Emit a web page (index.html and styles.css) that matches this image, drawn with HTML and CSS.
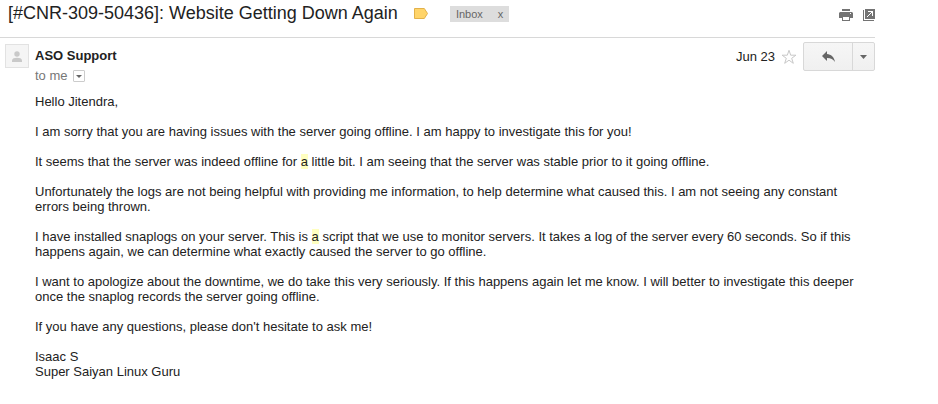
FILE: index.html
```html
<!DOCTYPE html>
<html lang="en">
<head>
    <meta charset="UTF-8">
    <meta name="viewport" content="width=device-width, initial-scale=1.0">
    <title>[#CNR-309-50436]: Website Getting Down Again</title>
    <link rel="stylesheet" href="styles.css">
</head>
<body>

    <main class="thread">

        <!-- Subject line -->
        <header class="subject-bar">
            <h1 class="subject">[#CNR-309-50436]: Website Getting Down Again</h1>
            <button type="button" class="icon-button importance" aria-label="Important">
                <svg width="14" height="11" viewBox="0 0 14 11">
                    <path d="M.5.5h9.8l3.2 5-3.2 5H.5z" fill="#ffd469" stroke="#e2b14a"/>
                </svg>
            </button>
            <div class="label">
                <span class="label-name">Inbox</span>
                <button type="button" class="label-remove" aria-label="Remove label Inbox">x</button>
            </div>
            <div class="tools">
                <button type="button" class="icon-button" aria-label="Print all">
                    <svg width="14" height="12" viewBox="0 0 14 12" fill="#737373">
                        <path d="M3 0h8v2H3z"/>
                        <path d="M1 3h12l1 1v5h-3V7H3v2H0V4z"/>
                        <path d="M3 7h8v5H3zM4 8v3h6V8z" fill-rule="evenodd"/>
                        <path d="M11 4h1v1h-1z" fill="#fff"/>
                    </svg>
                </button>
                <button type="button" class="icon-button" aria-label="In new window">
                    <svg width="12" height="12" viewBox="0 0 12 12">
                        <path d="M0 1h1v10h10v1H0zM2 0h10v10H2z" fill="#737373"/>
                        <path d="M5 2h5v5H9V4H8v1H7v1H6v1H5v1H4V7h1V6h1V5h1V4h1V3H5z" fill="#fff"/>
                    </svg>
                </button>
            </div>
        </header>

        <!-- Message -->
        <article class="message">
            <div class="avatar">
                <svg width="10" height="11" viewBox="0 0 10 11" fill="#c9c9c9">
                    <circle cx="5" cy="3" r="2.7"/>
                    <path d="M0 11V9.2C0 7.500 2.500 6.700 5 6.700s5 .8 5 2.500V11z"/>
                </svg>
            </div>
            <div class="message-main">
                <div class="message-head">
                    <div class="sender">
                        <h2 class="sender-name">ASO Support</h2>
                        <div class="recipient">
                            <span>to me</span>
                            <button type="button" class="details" aria-label="Show details">
                                <svg width="6" height="3" viewBox="0 0 6 3"><path d="M0 0h6L3 3z" fill="#666"/></svg>
                            </button>
                        </div>
                    </div>
                    <div class="actions">
                        <time class="date">Jun 23</time>
                        <button type="button" class="icon-button star" aria-label="Not starred">
                            <svg width="16" height="16" viewBox="0 0 16 16">
                                <path d="M8 1.300l1.700 4.900h5.200l-4.200 3.100 1.600 5L8 11.200l-4.300 3.100 1.600-5L1.100 6.200h5.200z" fill="#fff" stroke="#c8c8c8"/>
                            </svg>
                        </button>
                        <div class="reply-group">
                            <button type="button" class="reply" aria-label="Reply">
                                <svg width="13" height="11" viewBox="0 0 13 11">
                                    <path d="M0 5l5-5v3c4 .3 7.200 3 8 8-1.800-2.500-4-4-8-4v3z" fill="#666"/>
                                </svg>
                            </button>
                            <button type="button" class="more" aria-label="More">
                                <svg width="7" height="4" viewBox="0 0 7 4"><path d="M0 0h7L3.500 4z" fill="#666"/></svg>
                            </button>
                        </div>
                    </div>
                </div>

                <div class="message-body">
                    <p>Hello Jitendra,</p>
                    <p>I am sorry that you are having issues with the server going offline. I am happy to investigate this for you!</p>
                    <p>It seems that the server was indeed offline for <mark>a</mark> little bit. I am seeing that the server was stable prior to it going offline.</p>
                    <p>Unfortunately the logs are not being helpful with providing me information, to help determine what caused this. I am not seeing any constant errors being thrown.</p>
                    <p>I have installed snaplogs on your server. This is <mark>a</mark> script that we use to monitor servers. It takes a log of the server every 60 seconds. So if this happens again, we can determine what exactly caused the server to go offline.</p>
                    <p>I want to apologize about the downtime, we do take this very seriously. If this happens again let me know. I will better to investigate this deeper once the snaplog records the server going offline.</p>
                    <p>If you have any questions, please don't hesitate to ask me!</p>
                    <p>Isaac S<br>Super Saiyan Linux Guru</p>
                </div>
            </div>
        </article>

    </main>

</body>
</html>
```

FILE: styles.css
```css
* {
    margin: 0;
    padding: 0;
    box-sizing: border-box;
}

body {
    font-family: "Liberation Sans", Arial, sans-serif;
    font-size: 13px;
    line-height: 15px;
    background-color: #fff;
    color: #222;
}

button {
    font: inherit;
    color: inherit;
    background: none;
    border: none;
    cursor: pointer;
}

svg {
    display: block;
}

.thread {
    margin-right: 63px;
}

/* Subject line */
.subject-bar {
    display: flex;
    align-items: flex-start;
    height: 38px;
    padding-left: 8px;
    border-bottom: 1px solid #d8d8d8;
}

.subject {
    font-size: 18px;
    font-weight: 400;
    line-height: 26px;
}

.importance {
    margin: 8px 22px 0 16px;
}

.label {
    display: flex;
    align-items: center;
    height: 16px;
    margin-top: 6px;
    padding: 0 6px;
    background-color: #ddd;
    color: #666;
    font-size: 11px;
}

.label-name {
    margin-right: 15px;
}

.tools {
    display: flex;
    gap: 10px;
    margin-left: auto;
    padding-top: 9px;
}

/* Message */
.message {
    display: flex;
    gap: 6px;
    padding: 4px 0 0 5px;
}

.avatar {
    display: flex;
    flex: none;
    align-items: center;
    justify-content: center;
    width: 24px;
    height: 24px;
    margin-top: 2px;
    background-color: #f5f5f5;
    border: 1px solid #e2e2e2;
}

.message-main {
    flex: 1;
}

.message-head {
    display: flex;
    justify-content: space-between;
    height: 52px;
}

.sender {
    padding-top: 4px;
}

.sender-name {
    font-size: 13px;
    font-weight: 700;
    line-height: 20px;
}

.recipient {
    display: flex;
    align-items: center;
    gap: 5px;
    line-height: 20px;
    color: #777;
}

.details {
    display: flex;
    align-items: center;
    justify-content: center;
    width: 12px;
    height: 12px;
    border: 1px solid #ccc;
    border-radius: 1px;
}

.actions {
    display: flex;
    align-items: center;
    height: 29px;
}

.star {
    margin: 0 6px;
}

.reply-group {
    display: flex;
    height: 29px;
    background-image: linear-gradient(#f6f6f6, #f0f0f0);
    border: 1px solid #d8d8d8;
    border-radius: 2px;
}

.reply,
.more {
    display: flex;
    align-items: center;
    justify-content: center;
}

.reply {
    width: 49px;
    border-right: 1px solid #d8d8d8;
}

.more {
    width: 21px;
}

/* Message text */
.message-body {
    padding-right: 20px;
}

.message-body p {
    margin-bottom: 15px;
}

.message-body mark {
    background-color: #ffffc0;
    color: inherit;
}
```
